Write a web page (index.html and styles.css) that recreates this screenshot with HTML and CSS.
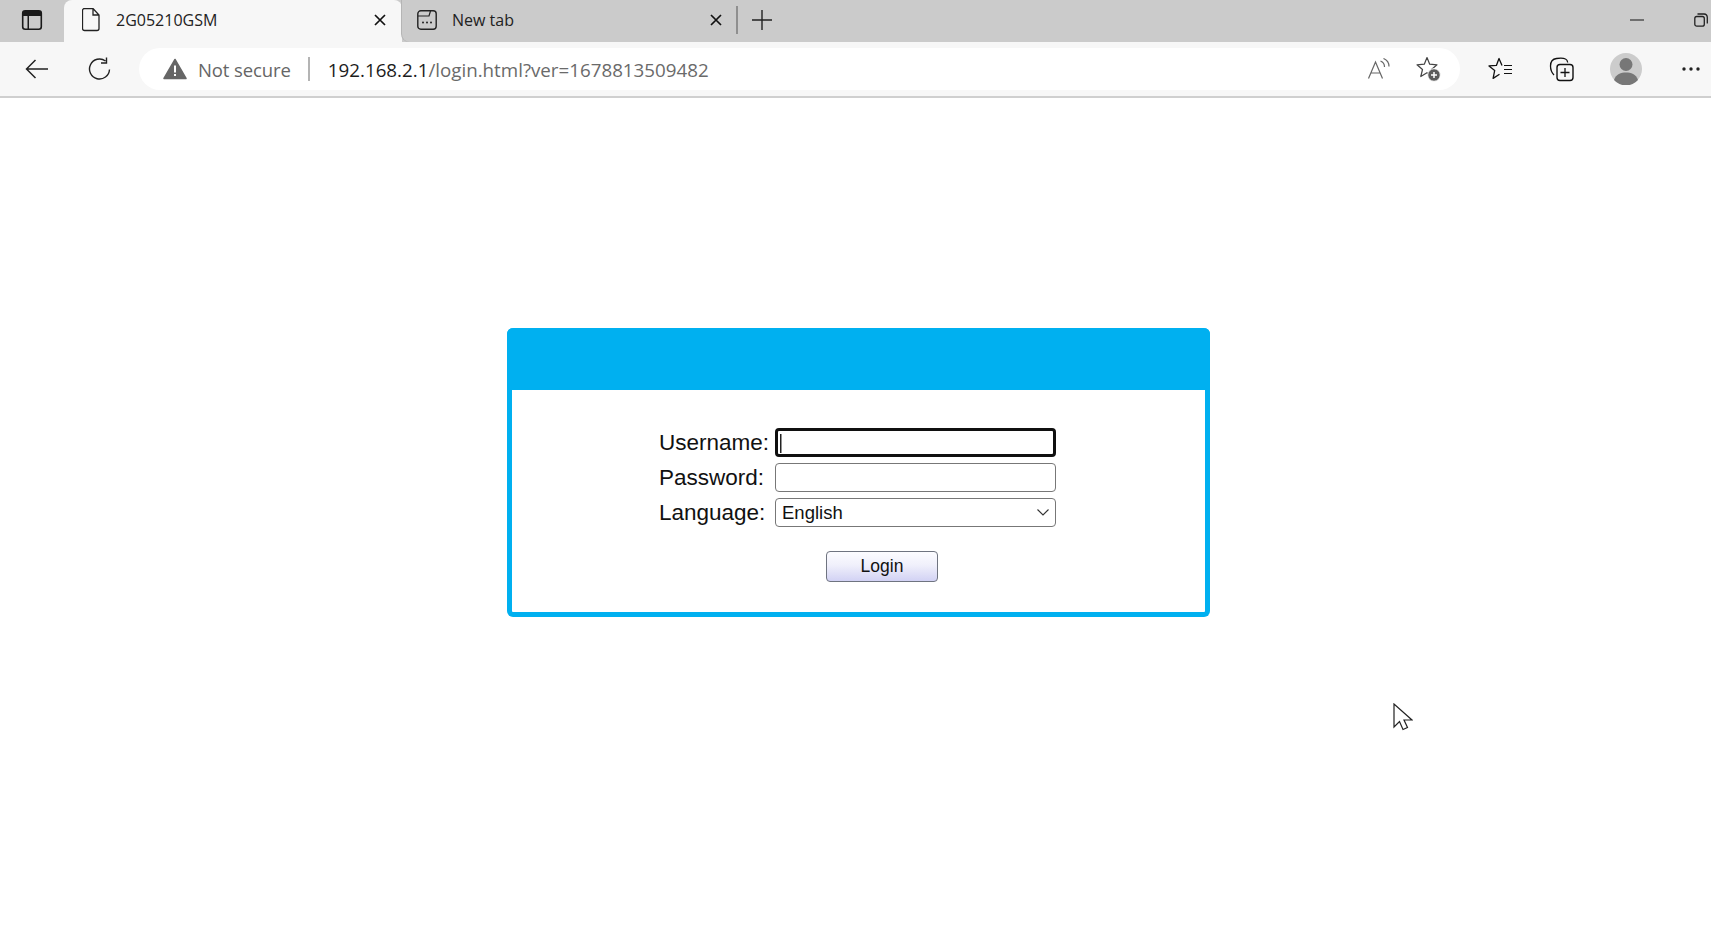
FILE: index.html
```html
<!DOCTYPE html>
<html lang="en">
<head>
<meta charset="utf-8">
<title>2G05210GSM</title>
<link rel="stylesheet" href="styles.css">
</head>
<body>
<div class="tabstrip">
  <div class="sidebtn">
    <svg class="ico" width="22" height="22" viewBox="0 0 22 22"><rect x="1.700" y="1.700" width="18.600" height="18.600" rx="2.500" fill="none" stroke="#1a1a1a" stroke-width="1.600"/><path d="M2 2h18v5H8v13H6.500V7H2z" fill="#1a1a1a"/></svg>
  </div>
  <div class="tab active">
    <svg width="18" height="24" viewBox="0 0 18 24"><path d="M2.500 1h8.500l6 6.500v13.500a2 2 0 0 1-2 2H2.500a2 2 0 0 1-2-2V3a2 2 0 0 1 2-2zM11 1v6.500h6" transform="translate(0 -.5)" fill="none" stroke="#222" stroke-width="1.300"/></svg>
    <span class="tabtitle">2G05210GSM</span>
    <svg class="close" width="14" height="14" viewBox="0 0 14 14"><path d="M2 2l10 10M12 2L2 12" stroke="#111" stroke-width="1.700"/></svg>
  </div>
  <div class="tab inactive">
    <svg width="20" height="20" viewBox="0 0 20 20"><rect x=".8" y=".8" width="18.400" height="18.400" rx="3" fill="none" stroke="#222" stroke-width="1.400"/><path d="M1 6h11l1.500-5" fill="none" stroke="#222" stroke-width="1.200"/><circle cx="6" cy="12.500" r="1" fill="#222"/><circle cx="10" cy="12.500" r="1" fill="#222"/><circle cx="14" cy="12.500" r="1" fill="#222"/></svg>
    <span class="tabtitle">New tab</span>
    <svg class="close" width="14" height="14" viewBox="0 0 14 14"><path d="M2 2l10 10M12 2L2 12" stroke="#111" stroke-width="1.700"/></svg>
  </div>
  <div class="tabsep"></div>
  <svg class="plus" width="20" height="20" viewBox="0 0 20 20"><path d="M10 0v20M0 10h20" stroke="#222" stroke-width="1.400"/></svg>
  <div class="winctl">
    <svg width="14" height="2" viewBox="0 0 14 2"><path d="M0 1h14" stroke="#333" stroke-width="1.200"/></svg>
    <svg class="restore" width="14" height="14" viewBox="0 0 14 14"><rect x=".8" y="3.500" width="9.500" height="9.700" rx="2" fill="none" stroke="#222" stroke-width="1.300"/><path d="M3.500 1h6.500a3.500 3.500 0 0 1 3.300 3.500v6" fill="none" stroke="#222" stroke-width="1.300"/></svg>
  </div>
</div>

<div class="toolbar">
  <svg class="back" width="24" height="20" viewBox="0 0 24 20"><path d="M23 10H1.500M10.500 1L1.500 10l9 9" fill="none" stroke="#222" stroke-width="1.500"/></svg>
  <svg class="reload" width="24" height="24" viewBox="0 0 24 24"><path d="M21.500 12.500A10 10 0 1 1 17.500 4M18.500 .5V6h-5.500" fill="none" stroke="#222" stroke-width="1.400"/></svg>
  <div class="addr">
    <svg class="warn" width="24" height="22" viewBox="0 0 24 22"><path d="M12 1.500L23 20.500H1z" fill="#666" stroke="#666" stroke-width="1.500" stroke-linejoin="round"/><path d="M12 7.500v7M12 16v2" stroke="#fff" stroke-width="2"/></svg>
    <span class="notsecure">Not secure</span>
    <span class="addrsep"></span>
    <span class="url"><span class="host">192.168.2.1</span>/login.html?ver=1678813509482</span>
    <svg class="readaloud" width="24" height="22" viewBox="0 0 24 22"><path d="M1.500 20.500L8.500 4l7 16.500M4 15h9.500" fill="none" stroke="#666" stroke-width="1.200"/><path d="M13.500 3c2.500 1 4 3 4 6M16.500 .5c3 1.200 5.500 4 5.500 8" fill="none" stroke="#666" stroke-width="1.200"/></svg>
    <svg class="addfav" width="26" height="26" viewBox="0 0 26 26"><path d="M12 1.500l2.700 6.700 7.300.6-5.500 4.700 1.700 7-6.200-3.800-6.200 3.800 1.700-7L2 8.800l7.300-.6z" fill="none" stroke="#444" stroke-width="1.200" stroke-linejoin="round"/><circle cx="19" cy="19" r="6.300" fill="#5c5c5c" stroke="#fff" stroke-width="1"/><path d="M19 16v6M16 19h6" stroke="#fff" stroke-width="1.500"/></svg>
  </div>
  <svg class="favs" width="26" height="24" viewBox="0 0 26 24"><path d="M15 8.400L12 1.500 9.400 8.400l-7.400.5 5.700 4.500-1.600 8 6.400-4.200" fill="none" stroke="#111" stroke-width="1.300" stroke-linejoin="round"/><path d="M17 8.500h8M17 12.500h8M17 16.500h8" stroke="#111" stroke-width="1.200"/></svg>
  <svg class="colls" width="26" height="26" viewBox="0 0 26 26"><path d="M5 19c-2-2-3.500-5-3.500-9 0-4 2-7 6-7.500 3-.4 7-.5 9 .5 1.500.7 2 2 2.200 3.500" fill="none" stroke="#111" stroke-width="1.300"/><rect x="8" y="8.500" width="16" height="16" rx="3" fill="#f7f7f7" stroke="#111" stroke-width="1.400"/><path d="M16 12v9M11.500 16.500h9" stroke="#111" stroke-width="1.300"/></svg>
  <svg class="avatar" width="32" height="32" viewBox="0 0 32 32"><circle cx="16" cy="16" r="16" fill="#ccc"/><circle cx="16" cy="11.500" r="6.500" fill="#777"/><path d="M4 27c2-6 7-7.500 12-7.500S26 21 28 27a16 16 0 0 1-24 0z" fill="#777"/></svg>
  <svg class="more" width="18" height="4" viewBox="0 0 18 4"><circle cx="2" cy="2" r="1.700" fill="#222"/><circle cx="9" cy="2" r="1.700" fill="#222"/><circle cx="16" cy="2" r="1.700" fill="#222"/></svg>
</div>

<main class="page">
  <div class="panel">
    <div class="panelhead"></div>
    <form class="loginform">
      <div class="fields">
        <label class="lbl" for="u">Username:</label><input class="inp focus" id="u" type="text">
        <label class="lbl" for="p">Password:</label><input class="inp" id="p" type="text">
        <label class="lbl" for="l">Language:</label>
        <div class="inp sel" id="l"><span class="seltext">English</span><svg width="12" height="7" viewBox="0 0 12 7"><path d="M.5.5L6 6l5.500-5.500" fill="none" stroke="#333" stroke-width="1.100"/></svg></div>
      </div>
      <div class="btn">Login</div>
    </form>
  </div>
  <svg class="cursor" width="20" height="28" viewBox="0 0 20 28"><path d="M1 1v23l5.500-5.500 3.500 8 4.500-2-3.500-7.500H19z" fill="#fff" stroke="#222" stroke-width="1.200" stroke-linejoin="miter"/></svg>
</main>
</body>
</html>
```
FILE: styles.css
```css
* { box-sizing: border-box; }
html, body { margin: 0; height: 100%; overflow: hidden; background: #fff; }
body { font-family: "Open Sans", "Noto Sans", sans-serif; width: 1711px; height: 931px; }

.tabstrip { height: 42px; background: #cbcbcb; display: flex; align-items: center; position: relative; }
.sidebtn { width: 64px; height: 42px; display: flex; align-items: center; justify-content: center; flex: none; padding-bottom: 3px; }
.tab { height: 42px; display: flex; align-items: center; flex: none; color: #222; font-size: 16px; padding-bottom: 3px; }
.tab.active { width: 338px; background: #f7f7f7; border-radius: 8px 8px 0 0; padding-left: 18px; padding-right: 15px; }
.tab.inactive { width: 336px; padding-left: 15px; padding-right: 15px; background: #cbcbcb; box-shadow: -1px 0 0 #b5b5b5; border-radius: 0 0 0 8px; }
.tab .tabtitle { flex: 1; }
.tab.active .tabtitle { margin-left: 16px; }
.tab.inactive .tabtitle { margin-left: 15px; }
.close { flex: none; }
.tabsep { width: 2px; height: 28px; background: #8f8f8f; flex: none; margin-left: -2px; margin-bottom: 3px; }
.plus { margin-left: 14px; flex: none; margin-bottom: 3px; }
.winctl { margin-left: auto; display: flex; align-items: center; gap: 50px; margin-right: 5px; padding-bottom: 3px; }
.restore { margin-right: -2px; }

.toolbar { height: 56px; background: #f7f7f7; border-bottom: 2px solid #cfcfcf; display: flex; align-items: center; position: relative; }
.back { margin-left: 25px; flex: none; }
.reload { margin-left: 39px; flex: none; }
.addr { margin-left: 27px; width: 1321px; height: 42px; background: #fff; border-radius: 21px; display: flex; align-items: center; padding-left: 24px; flex: none; }
.notsecure { margin-left: 11px; color: #666; font-size: 18.500px; letter-spacing: -.1px; white-space: nowrap; }
.addrsep { width: 2px; height: 24px; background: #b4b4b4; margin-left: 17px; flex: none; }
.url { margin-left: 18px; color: #6a6a6a; font-size: 18.750px; white-space: nowrap; }
.host { color: #1c1c1c; }
.readaloud { margin-left: auto; flex: none; }
.addfav { margin-left: 24px; margin-right: 19px; flex: none; }
.favs { margin-left: 27px; flex: none; }
.colls { margin-left: 36px; flex: none; }
.avatar { margin-left: 35px; flex: none; }
.more { margin-left: 40px; flex: none; }

.page { position: relative; height: 833px; padding-top: 230px; padding-left: 507px; }
.panel { width: 703px; height: 289px; border: 5px solid #00b0f0; border-top: 0; border-radius: 6px; background: #fff; }
.panelhead { height: 62px; background: #00b0f0; margin: 0 -5px; border-radius: 6px 6px 0 0; }
.loginform { display: flex; flex-direction: column; padding-top: 38px; padding-left: 147px; }
.fields { display: grid; grid-template-columns: 116px 281px; row-gap: 6.500px; align-items: center; font-family: "Liberation Sans", Arial, sans-serif; }
.lbl { font-size: 22.500px; color: #111; line-height: 26px; padding-top: 2px; white-space: nowrap; }
.inp { display: flex; height: 28.500px; width: 281px; border: 1.500px solid #777; border-radius: 4px; background: #fff; padding: 0; outline: none; font: inherit; margin: 0; }
.inp.focus { border: 3px solid #101010; border-radius: 4px; position: relative; background: linear-gradient(#222, #222) 2px 3px / 1.500px 19px no-repeat #fff; }
.sel { align-items: center; justify-content: space-between; padding: 0 6px 0 6px; font-size: 18.500px; color: #111; }
.seltext { margin-top: 2px; }
.btn { margin-left: 167px; margin-top: 24.500px; width: 112px; height: 30.500px; border: 1.500px solid #6f7480; border-radius: 4px; background: linear-gradient(#fcfcff 0%, #f0f0fb 45%, #d2d2f4 100%); font-family: "Liberation Sans", Arial, sans-serif; font-size: 17.500px; color: #111; display: flex; align-items: center; justify-content: center; }
.cursor { position: absolute; left: 1393px; top: 605px; }
```
